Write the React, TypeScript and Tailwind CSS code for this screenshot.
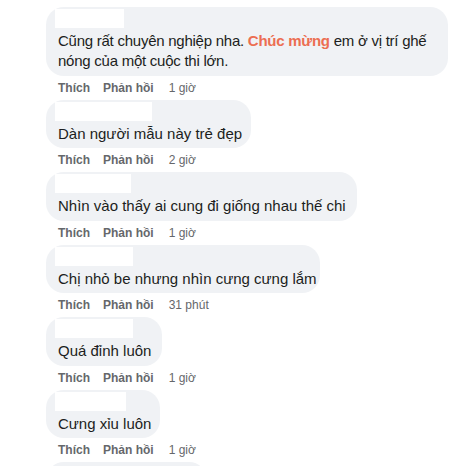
import type { JSX } from 'react';

type Comment = {
  id: number;
  nameWidth: string;
  bubbleWidth: string;
  time: string;
  body: JSX.Element | string;
};

const comments: Comment[] = [
  {
    id: 1,
    nameWidth: 'w-[69px]',
    bubbleWidth: 'w-[402px]',
    time: '1 giờ',
    body: (
      <span className="tracking-[-0.25px]">
        Cũng rất chuyên nghiệp nha. <span className="font-bold text-[#ec6e52]">Chúc mừng</span> em ở vị trí ghế
        <br />
        nóng của một cuộc thi lớn.
      </span>
    ),
  },
  { id: 2, nameWidth: 'w-[97px]', bubbleWidth: 'w-[205px]', time: '2 giờ', body: 'Dàn người mẫu này trẻ đẹp' },
  { id: 3, nameWidth: 'w-[76px]', bubbleWidth: 'w-[311px]', time: '1 giờ', body: 'Nhìn vào thấy ai cung đi giống nhau thế chi' },
  { id: 4, nameWidth: 'w-[78px]', bubbleWidth: 'w-[274px]', time: '31 phút', body: 'Chị nhỏ be nhưng nhìn cưng cưng lắm' },
  { id: 5, nameWidth: 'w-[78px]', bubbleWidth: 'w-[116px]', time: '1 giờ', body: 'Quá đỉnh luôn' },
  { id: 6, nameWidth: 'w-[71px]', bubbleWidth: 'w-[114px]', time: '1 giờ', body: 'Cưng xỉu luôn' },
];

function CommentItem({ comment }: { comment: Comment }): JSX.Element {
  return (
    <div>
      <div className={`${comment.bubbleWidth} rounded-[18px] bg-[#f0f2f5] px-[9px] pt-[2px] pb-[4.5px]`}>
        <div className={`${comment.nameWidth} h-[19px] bg-white`} />
        <p className="mt-[3px] whitespace-nowrap px-[3px] text-[15px] leading-[20px] text-[#1c1e21]">
          {comment.body}
        </p>
      </div>
      <div className="flex h-[24px] items-center whitespace-nowrap pl-[12px] text-[12px] text-[#65676b]">
        <span className="font-bold">Thích</span>
        <span className="ml-[13px] font-bold">Phản hồi</span>
        <span className="ml-[15px]">{comment.time}</span>
      </div>
    </div>
  );
}

export default function App(): JSX.Element {
  return (
    <div className="h-[466px] w-[474px] overflow-hidden bg-white pl-[46px] pt-[7px] font-['Liberation_Sans',sans-serif]">
      {comments.map((c) => (
        <CommentItem key={c.id} comment={c} />
      ))}
      <div className="h-[40px] w-[161px] rounded-[18px] bg-[#f0f2f5]" />
    </div>
  );
}
